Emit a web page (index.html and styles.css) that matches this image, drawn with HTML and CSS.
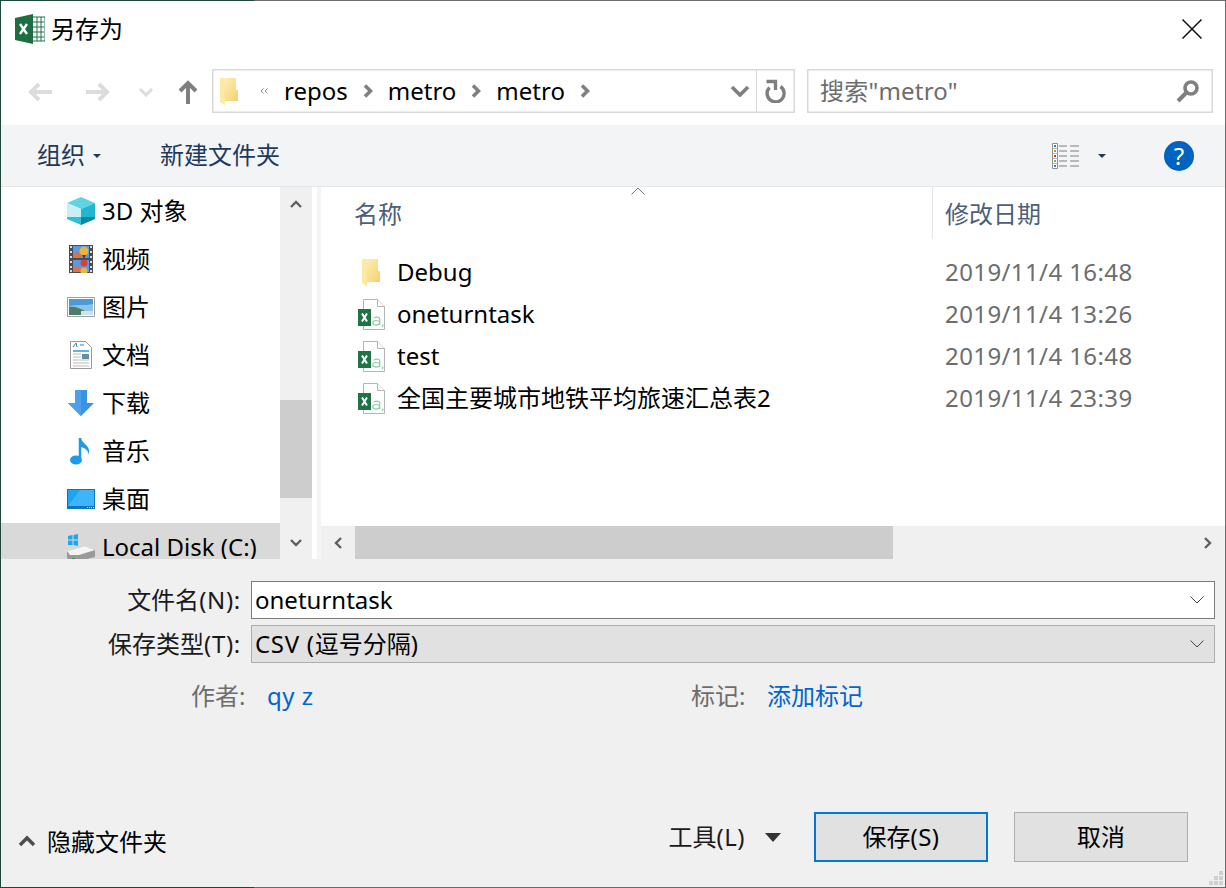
FILE: index.html
```html
<!DOCTYPE html>
<html lang="zh-CN">
<head>
<meta charset="utf-8">
<title>另存为</title>
<link rel="stylesheet" href="styles.css">
</head>
<body>
<svg class="defs" width="0" height="0" aria-hidden="true">
  <defs>
    <linearGradient id="fg" x1="0" x2="1" y1="0" y2="1"><stop offset="0" stop-color="#fdf1bd"/><stop offset=".55" stop-color="#f9e08f"/><stop offset="1" stop-color="#f3cd68"/></linearGradient>
    <symbol id="folder" viewBox="0 0 18 27">
      <path d="M0 0H16V12H18V23H5V27L0 24Z" fill="url(#fg)"/>
      <path d="M0 0H3L5 23V27L0 24Z" fill="#fbe9a6"/>
    </symbol>
    <symbol id="xls" viewBox="0 0 28 31">
      <path d="M5.500 .5H19.500L26.500 7.500V30.500H5.500Z" fill="#fff" stroke="#b5b5b5"/>
      <path d="M19.500 .5V7.500H26.500" fill="#fff" stroke="#b5b5b5"/>
      <path d="M0 10H13V27H0Z" fill="#217346"/>
      <path d="M4 14.500L9 22.500M9 14.500L4 22.500" stroke="#fff" stroke-width="2" fill="none"/>
      <path d="M22 19.500C21 17.800 16.500 17.600 15.800 19.400M21.700 19V26M21.700 23C20 20.800 15 21 14.800 23.800C14.700 26.500 20 27 21.700 24.400M25 25.500L24.300 28" stroke="#8ecba8" stroke-width="1.200" fill="none"/>
    </symbol>
  </defs>
</svg>
<div class="window">
  <div class="inner">
    <header class="titlebar">
      <svg class="app-icon" viewBox="0 0 30 30" width="30" height="30">
        <path d="M17 3H30V27H17Z" fill="#fff" stroke="#217346"/>
        <path d="M18 8H29M18 13H29M18 18H29M18 23H29M22 3V27M26 3V27" stroke="#217346" fill="none"/>
        <path d="M0 4L18 0V30L0 26Z" fill="#1d6f42"/>
        <path d="M5 10L12 20M12 10L5 20" stroke="#fff" stroke-width="2.400" fill="none"/>
      </svg>
      <span class="title">另存为</span>
      <svg class="close" viewBox="0 0 20 20" width="20" height="20"><path d="M.5 .5L19.500 19.500M19.500 .5L.5 19.500" stroke="#111" stroke-width="1.500" fill="none"/></svg>
    </header>

    <div class="addressrow">
      <svg class="nav-arrow" viewBox="0 0 24 20" width="24" height="20"><path d="M11 2L3 10L11 18M3 10H24" stroke="#dcdcdc" stroke-width="4" fill="none"/></svg>
      <svg class="nav-arrow forward" viewBox="0 0 24 20" width="24" height="20"><path d="M13 2L21 10L13 18M21 10H0" stroke="#dcdcdc" stroke-width="4" fill="none"/></svg>
      <svg class="nav-drop" viewBox="0 0 14 10" width="14" height="10"><path d="M1 2L7 8L13 2" stroke="#dcdcdc" stroke-width="3" fill="none"/></svg>
      <svg class="nav-up" viewBox="0 0 20 24" width="20" height="24"><path d="M2 11L10 3L18 11M10 3V24" stroke="#7f7f7f" stroke-width="4" fill="none"/></svg>
      <div class="address">
        <svg class="addr-folder" width="18" height="27"><use href="#folder"/></svg>
        <svg class="double" viewBox="0 0 8 6" width="8" height="6"><path d="M3.500 .5L1 3L3.500 5.500M7.500 .5L5 3L7.500 5.500" stroke="#8a8a8a" fill="none"/></svg>
        <span class="crumb">repos</span>
        <svg class="chev" viewBox="0 0 10 14" width="10" height="14"><path d="M2 1.500L7.500 7L2 12.500" stroke="#808080" stroke-width="3.600" fill="none"/></svg>
        <span class="crumb">metro</span>
        <svg class="chev" viewBox="0 0 10 14" width="10" height="14"><path d="M2 1.500L7.500 7L2 12.500" stroke="#808080" stroke-width="3.600" fill="none"/></svg>
        <span class="crumb">metro</span>
        <svg class="chev" viewBox="0 0 10 14" width="10" height="14"><path d="M2 1.500L7.500 7L2 12.500" stroke="#808080" stroke-width="3.600" fill="none"/></svg>
        <span class="spacer"></span>
        <svg class="addr-drop" viewBox="0 0 20 12" width="20" height="12"><path d="M2 2L10 10L18 2" stroke="#7f7f7f" stroke-width="3.600" fill="none"/></svg>
        <span class="refresh">
          <svg viewBox="0 0 22 24" width="22" height="24"><path d="M15.500 7.500A8.500 8.500 0 1 1 4.500 8.500" stroke="#7f7f7f" stroke-width="3.400" fill="none"/><path d="M1.500 2.500H10.500V11" stroke="#7f7f7f" stroke-width="3.400" fill="none"/></svg>
        </span>
      </div>
      <div class="search">
        <span class="search-text">搜索"metro"</span>
        <svg viewBox="0 0 24 24" width="24" height="24"><circle cx="15" cy="9" r="6" fill="#fff" stroke="#7f7f7f" stroke-width="3.600"/><path d="M10 14L2 22" stroke="#7f7f7f" stroke-width="4" fill="none"/></svg>
      </div>
    </div>

    <div class="toolbar">
      <span class="tool-item">组织</span>
      <span class="mini-caret"></span>
      <span class="tool-item newfolder">新建文件夹</span>
      <span class="spacer"></span>
      <svg class="view-icon" viewBox="0 0 28 26" width="28" height="26">
        <path d="M.5 .5H5.500V25.500H.5Z" fill="#fff" stroke="#8f8f8f"/>
        <path d="M.5 5.500H5.500M.5 10.500H5.500M.5 15.500H5.500M.5 20.500H5.500" stroke="#b5b5b5" fill="none"/>
        <path d="M2 2h2v2H2z" fill="#3a78c2"/><path d="M2 7h2v2H2z" fill="#b9942f"/><path d="M2 12h2v2H2z" fill="#c0392b"/><path d="M2 17h2v2H2z" fill="#7fae5a"/><path d="M2 22h2v2H2z" fill="#3a78c2"/>
        <path d="M7 3H15M18 3H27M7 8H15M18 8H27M7 13H15M18 13H27M7 18H15M18 18H27M7 23H15M18 23H27" stroke="#7f7f7f" fill="none"/>
      </svg>
      <span class="mini-caret view-caret"></span>
      <span class="help">?</span>
    </div>

    <main class="main">
      <nav class="tree">
        <div class="tree-item">
          <svg viewBox="0 0 28 28" width="28" height="28"><path d="M14 0L28 6L14 12L0 6Z" fill="#5ed5e4"/><path d="M0 6L14 12V20L0 20Z" fill="#c9eff3"/><path d="M28 6L14 12V20H28Z" fill="#22b6d2"/><path d="M0 20H14V28L0 22Z" fill="#2fc0d6"/><path d="M28 20H14V28L28 22Z" fill="#0e88a2"/></svg>
          <span>3D 对象</span>
        </div>
        <div class="tree-item">
          <svg viewBox="0 0 24 28" width="24" height="28"><path d="M0 0H24V28H0Z" fill="#4c4c4c"/><path d="M1 1v2h2V1zM1 6v2h2V6zM1 11v2h2v-2zM1 16v2h2v-2zM1 21v2h2v-2zM1 25v2h2v-2zM21 1v2h2V1zM21 6v2h2V6zM21 11v2h2v-2zM21 16v2h2v-2zM21 21v2h2v-2zM21 25v2h2v-2z" fill="#ddd"/><path d="M4 1H20V13H4Z" fill="#5a9ae4"/><path d="M4 15H20V27H4Z" fill="#5a9ae4"/><path d="M4 9L9 7L13 10V13H4ZM4 23L9 21L13 24V27H4Z" fill="#d9734a"/><circle cx="15" cy="6" r="4.500" fill="#e8b53a"/><path d="M13 10L15 14L17 10Z" fill="#444"/><circle cx="15" cy="18" r="3.500" fill="#d8403a"/><circle cx="15" cy="26" r="3.500" fill="#e8b53a"/></svg>
          <span>视频</span>
        </div>
        <div class="tree-item">
          <svg viewBox="0 0 28 20" width="28" height="20"><path d="M.5 .5H27.500V19.500H.5Z" fill="#fff" stroke="#a0a0a0"/><path d="M2 2H26V18H2Z" fill="#8fc4e8"/><path d="M2 2H26V7C18 9 10 7 2 9Z" fill="#4a9bd6"/><path d="M2 10C8 9 12 11 18 14L26 15V18H2Z" fill="#4e7d6a"/><path d="M14 14H26V18H14Z" fill="#cfe3ea"/></svg>
          <span>图片</span>
        </div>
        <div class="tree-item">
          <svg viewBox="0 0 22 28" width="22" height="28"><path d="M.5 .5H15.500L21.500 6.500V27.500H.5Z" fill="#fff" stroke="#9a9a9a"/><path d="M3 10H19" stroke="#2a9ae0" stroke-width="1.500"/><path d="M3 6L6 2L7 6M10 4H14" stroke="#2a7ac0" fill="none"/><path d="M3 13H11M3 16H11M3 19H19M3 22H19M3 25H19" stroke="#bbb"/><path d="M12 13H19V18H12Z" fill="#5f8fa0"/></svg>
          <span>文档</span>
        </div>
        <div class="tree-item">
          <svg viewBox="0 0 28 26" width="28" height="26"><path d="M8 0H20V13H27L14 26L1 13H8Z" fill="#3a92e4"/><path d="M8 0H14V26L1 13H8Z" fill="#4aa0ea"/></svg>
          <span>下载</span>
        </div>
        <div class="tree-item">
          <svg viewBox="0 0 22 28" width="22" height="28"><path d="M10 1V21" stroke="#1e9be8" stroke-width="2.500"/><ellipse cx="6" cy="23" rx="6" ry="4.500" fill="#1e9be8"/><path d="M11 1C12 7 21 8 19 18C18 13 15 11 11 10Z" fill="#1e9be8"/></svg>
          <span>音乐</span>
        </div>
        <div class="tree-item">
          <svg viewBox="0 0 28 20" width="28" height="20"><path d="M0 0H28V20H0Z" fill="#0f74c8"/><path d="M1 1H27V17H1Z" fill="#1ea4f4"/><path d="M1 17L13 1H27V17Z" fill="#3db5f8"/><path d="M20 18.500H27" stroke="#cde" stroke-dasharray="1 1"/></svg>
          <span>桌面</span>
        </div>
        <div class="tree-item selected">
          <svg viewBox="0 0 28 28" width="28" height="28"><path d="M0 18L18 13L28 17V24L12 28H3L0 25Z" fill="#9a9a9a"/><path d="M0 18L18 13L28 17L12 22H3Z" fill="#f4f4f4"/><path d="M5 25h3v1H5z" fill="#3a9a4a"/><path d="M1 3L5.500 2V6.500H1ZM6.500 2L11 1V6.500H6.500ZM1 7.500H5.500V12H1ZM6.500 7.500H11V13L6.500 12Z" fill="#1ea7ee"/></svg>
          <span>Local Disk (C:)</span>
        </div>
      </nav>
      <div class="vscroll">
        <div class="vbtn"><svg viewBox="0 0 12 8" width="12" height="8"><path d="M1 7L6 2L11 7" stroke="#606060" stroke-width="2.400" fill="none"/></svg></div>
        <div class="vtrack"><div class="vthumb"></div></div>
        <div class="vbtn"><svg viewBox="0 0 12 8" width="12" height="8"><path d="M1 1L6 6L11 1" stroke="#606060" stroke-width="2.400" fill="none"/></svg></div>
      </div>
      <div class="splitter"></div>
      <section class="files">
        <svg class="sort" viewBox="0 0 14 8" width="14" height="8"><path d="M.5 7.500L7 1L13.500 7.500" stroke="#7a7a7a" fill="none"/></svg>
        <div class="columns">
          <div class="col-name">名称</div>
          <div class="col-date">修改日期</div>
        </div>
        <div class="list">
          <div class="row"><span class="ficon"><svg class="folder-row" width="18" height="27"><use href="#folder"/></svg></span><span class="fname">Debug</span><span class="fdate">2019/11/4 16:48</span></div>
          <div class="row"><span class="ficon"><svg width="28" height="31"><use href="#xls"/></svg></span><span class="fname">oneturntask</span><span class="fdate">2019/11/4 13:26</span></div>
          <div class="row"><span class="ficon"><svg width="28" height="31"><use href="#xls"/></svg></span><span class="fname">test</span><span class="fdate">2019/11/4 16:48</span></div>
          <div class="row"><span class="ficon"><svg width="28" height="31"><use href="#xls"/></svg></span><span class="fname">全国主要城市地铁平均旅速汇总表2</span><span class="fdate">2019/11/4 23:39</span></div>
        </div>
        <div class="hscroll">
          <div class="hbtn"><svg viewBox="0 0 8 12" width="8" height="12"><path d="M7 1L2 6L7 11" stroke="#606060" stroke-width="2.400" fill="none"/></svg></div>
          <div class="hthumb"></div>
          <div class="spacer"></div>
          <div class="hbtn"><svg viewBox="0 0 8 12" width="8" height="12"><path d="M1 1L6 6L1 11" stroke="#606060" stroke-width="2.400" fill="none"/></svg></div>
        </div>
      </section>
    </main>

    <section class="form">
      <div class="fields">
        <label class="field-label">文件名<span class="wide">(N):</span></label>
        <div class="combo edit"><span>oneturntask</span><svg viewBox="0 0 14 8" width="14" height="8"><path d="M.5 .5L7 7L13.500 .5" stroke="#444" fill="none"/></svg></div>
        <label class="field-label">保存类型<span class="wide">(T):</span></label>
        <div class="combo select"><span><span class="wide">CSV (</span>逗号分隔)</span><svg viewBox="0 0 14 8" width="14" height="8"><path d="M.5 .5L7 7L13.500 .5" stroke="#444" fill="none"/></svg></div>
      </div>
      <div class="meta">
        <span class="meta-key">作者:</span><span class="meta-val author">qy z</span>
        <span class="meta-key tag-key">标记:</span><span class="meta-val">添加标记</span>
      </div>
      <div class="footer">
        <svg class="hide-chev" viewBox="0 0 18 12" width="18" height="12"><path d="M2 10L9 3L16 10" stroke="#4d4d4d" stroke-width="3.400" fill="none"/></svg>
        <span class="hide-label">隐藏文件夹</span>
        <span class="spacer"></span>
        <span class="tools">工具<span class="wide-s">(L)</span></span>
        <span class="tools-caret"></span>
        <button class="btn primary">保存<span class="wide-s">(S)</span></button>
        <button class="btn">取消</button>
      </div>
      <svg class="grip" viewBox="0 0 14 14" width="14" height="14"><path d="M10 0h4v4h-4zM5 5h4v4H5zM10 5h4v4h-4zM0 10h4v4H0zM5 10h4v4H5zM10 10h4v4h-4z" fill="#d0d0d0"/></svg>
    </section>
  </div>
</div>
</body>
</html>
```
FILE: styles.css
```css
* { box-sizing: border-box; }
html, body { margin: 0; padding: 0; }
body {
  width: 1226px;
  height: 888px;
  overflow: hidden;
  font-family: "Noto Sans", "Noto Sans CJK SC", sans-serif;
  font-size: 24px;
  line-height: 32px;
  color: #000;
}
.defs { position: absolute; }
svg { display: block; flex: none; }
.spacer { flex: 1; }
.wide { letter-spacing: .7px; }
.wide-s { letter-spacing: .5px; }
.window {
  height: 888px;
  padding: 1px;
  background: linear-gradient(90deg, #1d4a37 254px, #6b6b6b 254px);
}
.inner {
  height: 886px;
  background: #fff;
  display: flex;
  flex-direction: column;
}
.titlebar {
  height: 61px;
  flex: none;
  display: flex;
  align-items: center;
  padding: 0 23px 6px 14px;
}
.app-icon { margin-right: 6px; }
.title { flex: 1; }
.addressrow {
  height: 63px;
  flex: none;
  display: flex;
  align-items: flex-start;
  padding: 7px 12px 0 27px;
}
.nav-arrow { margin-top: 13px; margin-right: 34px; }
.nav-drop { margin: 18px 0 0 -5px; }
.nav-up { margin: 11px 0 0 25px; }
.address {
  margin-left: 14px;
  width: 583px;
  height: 44px;
  border: 1px solid #d9d9d9;
  display: flex;
  align-items: center;
  padding-left: 7px;
  box-shadow: 0 0 0 .5px #d9d9d9 inset;
}
.double { margin: 0 16px 0 22px; }
.chev { margin: 0 15px; }
.addr-drop { margin-right: 6px; }
.refresh {
  width: 38px;
  height: 42px;
  border-left: 1px solid #d9d9d9;
  display: flex;
  align-items: center;
  justify-content: center;
}
.search {
  margin-left: 12px;
  width: 406px;
  height: 44px;
  border: 1px solid #d9d9d9;
  box-shadow: 0 0 0 .5px #d9d9d9 inset;
  display: flex;
  align-items: center;
  justify-content: space-between;
  padding: 0 12px;
  color: #6d6d6d;
}
.search-text { letter-spacing: .2px; }
.toolbar {
  height: 62px;
  flex: none;
  background: #f3f4f6;
  border-bottom: 1px solid #e6e6e6;
  display: flex;
  align-items: center;
  padding: 0 31px 2px 36px;
  color: #1e395b;
}
.mini-caret {
  width: 0;
  height: 0;
  border: 4px solid transparent;
  border-top: 4px solid #1e395b;
  border-bottom: 0;
  margin: 2px 0 0 8px;
}
.newfolder { margin-left: 59px; }
.view-caret { margin: 2px 0 0 18px; }
.view-icon { margin-top: 2px; }
.help {
  width: 30px;
  height: 30px;
  border-radius: 50%;
  background: #0063c1;
  color: #fff;
  text-align: center;
  line-height: 30px;
  margin: 2px 0 0 58px;
  font-size: 24px;
}
.main {
  height: 372px;
  flex: none;
  display: flex;
  overflow: hidden;
}
.tree {
  width: 279px;
  flex: none;
  overflow: hidden;
}
.tree-item {
  height: 48px;
  display: flex;
  align-items: center;
  padding-left: 66px;
  gap: 7px;
}
.tree-item svg { width: 28px; }
.tree-item.selected { background: #d9d9d9; }
.vscroll {
  width: 32px;
  flex: none;
  background: #f0f0f0;
  display: flex;
  flex-direction: column;
}
.vbtn {
  height: 33px;
  flex: none;
  display: flex;
  align-items: center;
  justify-content: center;
}
.vtrack { flex: 1; padding-top: 180px; }
.vthumb { height: 98px; background: #cdcdcd; }
.splitter {
  width: 9px;
  flex: none;
  background: linear-gradient(90deg, #fff 5px, #f5f5f5 5px);
}
.files {
  flex: 1;
  min-width: 0;
  display: flex;
  flex-direction: column;
  position: relative;
}
.sort { position: absolute; left: 310px; top: 0; }
.columns {
  height: 52px;
  flex: none;
  display: flex;
  color: #4c607a;
}
.col-name {
  width: 612px;
  padding: 11px 0 0 33px;
  border-right: 1px solid #e5e5e5;
}
.col-date { padding: 11px 0 0 12px; }
.list { flex: 1; padding-top: 12px; }
.row {
  height: 42px;
  display: flex;
  align-items: center;
  padding-left: 37px;
}
.ficon { width: 39px; flex: none; }
.folder-row { margin-left: 4px; }
.fname { width: 548px; flex: none; }
.fdate { color: #6d6d6d; letter-spacing: .4px; }
.hscroll {
  height: 33px;
  flex: none;
  background: #f0f0f0;
  display: flex;
}
.hbtn {
  width: 34px;
  display: flex;
  align-items: center;
  justify-content: center;
}
.hthumb { width: 538px; background: #cdcdcd; }
.form {
  flex: 1;
  background: #f0f0f0;
  display: flex;
  flex-direction: column;
  position: relative;
  padding-top: 22px;
}
.fields {
  display: grid;
  grid-template-columns: 240px 964px;
  grid-auto-rows: 38px;
  column-gap: 10px;
  row-gap: 6px;
}
.field-label {
  text-align: right;
  line-height: 38px;
  color: #1a1a1a;
}
.combo {
  border: 1px solid #7a7a7a;
  background: #fff;
  display: flex;
  align-items: center;
  justify-content: space-between;
  padding: 0 10px 0 3px;
}
.combo.select { background: #e1e1e1; border-color: #adadad; }
.meta {
  display: flex;
  margin-top: 17px;
  padding-left: 190px;
}
.meta-key { color: #6d6d6d; width: 76px; }
.meta-val { color: #0066cc; }
.author { width: 424px; letter-spacing: .5px; }
.footer {
  display: flex;
  align-items: center;
  margin-top: auto;
  height: 50px;
  margin-bottom: 25px;
  padding: 0 37px 0 17px;
}
.hide-chev { margin-top: 8px; }
.hide-label { margin: 10px 0 0 11px; }
.tools { color: #1a1a1a; }
.tools-caret {
  width: 0;
  height: 0;
  border: 8px solid transparent;
  border-top: 9px solid #333;
  border-bottom: 0;
  margin: 0 33px 0 20px;
}
.btn {
  width: 174px;
  height: 50px;
  margin: 0;
  padding: 0;
  border: 1px solid #adadad;
  background: #e1e1e1;
  font: inherit;
  color: #000;
}
.btn.primary {
  border: 2px solid #0078d7;
  margin-right: 26px;
}
.grip { position: absolute; right: 2px; bottom: 2px; }
```
